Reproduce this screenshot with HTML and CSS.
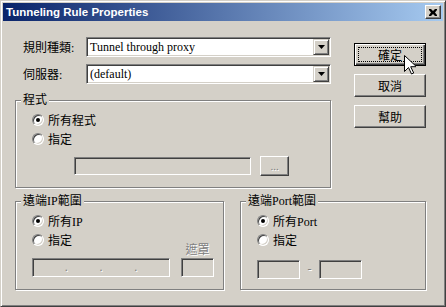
FILE: index.html
```html
<!DOCTYPE html>
<html lang="zh-Hant">
<head>
  <meta charset="UTF-8" />
  <title>Tunneling Rule Properties</title>
  <link rel="stylesheet" href="styles.css">
</head>
<body>
  <div class="window">
    <div class="titlebar">
      <span class="title">Tunneling Rule Properties</span>
      <span class="close">
        <svg width="8" height="7" viewBox="0 0 8 7"><path d="M0 0h2l2 2 2-2h2v1L6 3.5 8 6v1H6L4 5 2 7H0V6l2-2.5L0 1z" fill="#000"/></svg>
      </span>
    </div>

    <div class="body">
      <div class="top">
        <div class="form">
          <div class="row">
            <span class="label">規則種類:</span>
            <div class="combo">
              <span class="value">Tunnel through proxy</span>
              <span class="arrow"><svg width="7" height="4" viewBox="0 0 7 4"><path d="M0 0h7L3.5 4z" fill="#000"/></svg></span>
            </div>
          </div>
          <div class="row">
            <span class="label">伺服器:</span>
            <div class="combo">
              <span class="value">(default)</span>
              <span class="arrow"><svg width="7" height="4" viewBox="0 0 7 4"><path d="M0 0h7L3.5 4z" fill="#000"/></svg></span>
            </div>
          </div>

          <fieldset class="group group-prog">
            <legend>程式</legend>
            <div class="opts">
              <div class="radio"><span class="dot on"></span>所有程式</div>
              <div class="radio"><span class="dot"></span>指定</div>
            </div>
            <div class="prog-row">
              <div class="field prog-path"></div>
              <div class="btn browse"><span class="off">...</span></div>
            </div>
          </fieldset>
        </div>

        <div class="buttons">
          <div class="btn default"><span class="focus">確定</span></div>
          <div class="btn">取消</div>
          <div class="btn">幫助</div>
        </div>
      </div>

      <div class="bottom">
        <fieldset class="group group-ip">
          <legend>遠端IP範圍</legend>
          <div class="ip-wrap">
            <div class="ip-left">
              <div class="opts">
                <div class="radio"><span class="dot on"></span>所有IP</div>
                <div class="radio"><span class="dot"></span>指定</div>
              </div>
              <div class="field ip-box">
                <span class="off">.</span><span class="off">.</span><span class="off">.</span>
              </div>
            </div>
            <div class="ip-mask">
              <span class="off mask-label">遮罩</span>
              <div class="field mask-box"></div>
            </div>
          </div>
        </fieldset>

        <fieldset class="group group-port">
          <legend>遠端Port範圍</legend>
          <div class="opts">
            <div class="radio"><span class="dot on"></span>所有Port</div>
            <div class="radio"><span class="dot"></span>指定</div>
          </div>
          <div class="port-row">
            <div class="field port-box"></div>
            <span class="off dash">-</span>
            <div class="field port-box"></div>
          </div>
        </fieldset>
      </div>
    </div>

    <svg class="cursor" width="12" height="20" viewBox="0 0 12 20">
      <path d="M0.5 0.5v16l4-4 3 6.5 2.2-1-3-6.3h5.8z" fill="#fff" stroke="#000" stroke-width="1"/>
    </svg>
  </div>
</body>
</html>
```

FILE: styles.css
```css
* {
  box-sizing: border-box;
}
body {
  margin: 0;
  background: #d4d0c8;
  font-family: "Liberation Serif", "Noto Sans CJK TC", serif;
  font-size: 12px;
  color: #000;
}
.window {
  position: relative;
  width: 446px;
  height: 307px;
  padding: 2px;
  background: #d4d0c8;
  border: 1px solid;
  border-color: #d4d0c8 #404040 #404040 #d4d0c8;
  box-shadow: inset 1px 1px 0 #fff, inset -1px -1px 0 #808080;
}

/* title bar */
.titlebar {
  height: 18px;
  display: flex;
  align-items: center;
  justify-content: space-between;
  padding: 0 2px 0 3px;
  background: linear-gradient(to right, #0a246a, #a6caf0);
}
.title {
  font-family: "Liberation Sans", Arial, sans-serif;
  font-weight: bold;
  font-size: 11.5px;
  color: #fff;
}
.close {
  width: 16px;
  height: 14px;
  display: flex;
  align-items: center;
  justify-content: center;
  background: #d4d0c8;
  border: 1px solid;
  border-color: #fff #404040 #404040 #fff;
  box-shadow: inset -1px -1px 0 #808080;
}

/* layout */
.body {
  padding: 16px 0 0 12px;
}
.top {
  display: flex;
}
.form {
  width: 316px;
}
.row {
  display: flex;
  align-items: center;
  height: 20px;
  padding-left: 8px;
}
.row + .row {
  margin-top: 7px;
}
.label {
  width: 63px;
}

/* sunken controls */
.combo,
.field {
  border: 1px solid;
  border-color: #808080 #fff #fff #808080;
  box-shadow: inset 1px 1px 0 #404040, inset -1px -1px 0 #d4d0c8;
}
.combo {
  width: 245px;
  height: 20px;
  display: flex;
  align-items: center;
  justify-content: space-between;
  background: #fff;
  padding: 1px 1px 1px 3px;
}
.arrow {
  width: 16px;
  height: 16px;
  display: flex;
  align-items: center;
  justify-content: center;
  background: #d4d0c8;
  border: 1px solid;
  border-color: #d4d0c8 #404040 #404040 #d4d0c8;
  box-shadow: inset 1px 1px 0 #fff, inset -1px -1px 0 #808080;
}
.field {
  background: #d4d0c8;
}

/* raised buttons */
.btn {
  display: flex;
  align-items: center;
  justify-content: center;
  background: #d4d0c8;
  border: 1px solid;
  border-color: #fff #404040 #404040 #fff;
  box-shadow: inset -1px -1px 0 #808080;
}
.buttons {
  margin-left: 23px;
  margin-top: 6px;
  display: flex;
  flex-direction: column;
  gap: 8px;
}
.buttons .btn {
  width: 72px;
  height: 23px;
}
.btn.default {
  border: 1px solid #000;
  padding: 3px;
  box-shadow: inset 1px 1px 0 #fff, inset -1px -1px 0 #404040, inset -2px -2px 0 #808080;
}
.focus {
  width: 100%;
  height: 100%;
  display: flex;
  align-items: center;
  justify-content: center;
  border: 1px dotted #000;
}

/* group boxes */
.group {
  margin: 0;
  padding: 0;
  min-width: 0;
  border: 1px solid #808080;
  box-shadow: 1px 1px 0 #fff, inset 1px 1px 0 #fff;
}
.group legend {
  margin-left: 5px;
  padding: 0 2px;
  line-height: 14px;
  background: #d4d0c8;
}
.opts {
  padding: 3px 0 0 16px;
}
.radio {
  display: flex;
  align-items: center;
  gap: 4px;
  height: 19px;
}
.dot {
  width: 12px;
  height: 12px;
  border-radius: 50%;
  background: #fff;
  border: 1px solid;
  border-color: #808080 #fff #fff #808080;
  box-shadow: inset 1px 1px 0 #404040, inset -1px -1px 0 #d4d0c8;
  display: flex;
  align-items: center;
  justify-content: center;
}
.dot.on::after {
  content: "";
  width: 4px;
  height: 4px;
  border-radius: 50%;
  background: #000;
}
.off {
  color: #808080;
  text-shadow: 1px 1px 0 #fff;
}

.group-prog {
  margin-top: 9px;
  padding-bottom: 11px;
}
.prog-row {
  display: flex;
  align-items: center;
  gap: 9px;
  margin-top: 8px;
  padding-left: 58px;
}
.prog-path {
  width: 177px;
  height: 18px;
}
.browse {
  width: 29px;
  height: 20px;
  font-size: 11px;
}

.bottom {
  display: flex;
  margin-top: 6px;
}
.group-ip {
  width: 209px;
  padding-bottom: 12px;
}
.group-port {
  width: 186px;
  margin-left: 16px;
  padding-bottom: 10px;
}
.ip-wrap {
  display: flex;
  align-items: flex-end;
}
.ip-left .opts {
  padding-bottom: 9px;
}
.ip-box {
  margin-left: 16px;
  width: 138px;
  height: 19px;
  display: flex;
  justify-content: space-evenly;
  align-items: center;
}
.ip-mask {
  margin-left: 11px;
  display: flex;
  flex-direction: column;
  align-items: center;
}
.mask-box {
  width: 33px;
  height: 19px;
}
.port-row {
  display: flex;
  align-items: center;
  padding-left: 16px;
  margin-top: 11px;
}
.port-box {
  width: 43px;
  height: 19px;
}
.dash {
  width: 19px;
  text-align: center;
}

.cursor {
  position: absolute;
  left: 403px;
  top: 54px;
}
```
